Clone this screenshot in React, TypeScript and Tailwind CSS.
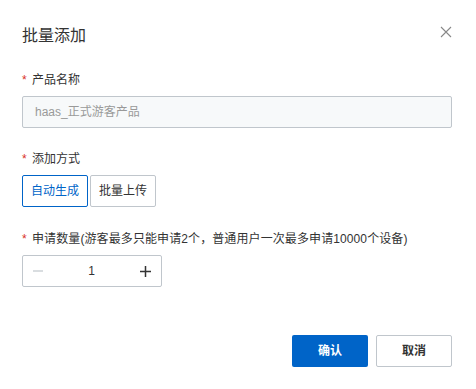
export default function App() {
  return (
    <div
      className="relative flex h-[389px] w-[476px] flex-col bg-white px-[22px] text-[#333]"
      style={{ fontFamily: '"Liberation Sans", "Noto Sans CJK SC", sans-serif' }}
    >
      <div className="flex items-start justify-between pt-[24px]">
        <h1 className="text-[16px] leading-[24px]">批量添加</h1>
        <button className="mt-[2px] mr-[2px] text-[#888]">
          <svg width="12" height="12" viewBox="0 0 12 12" fill="none" stroke="currentColor" strokeWidth="1.1">
            <path d="M1 1L11 11M11 1L1 11" />
          </svg>
        </button>
      </div>

      <label className="mt-[23px] flex h-[18px] items-center text-[12px]">
        <span className="w-[10px] text-[#d93026]">*</span>
        产品名称
      </label>
      <div className="mt-[7px] flex h-[32px] w-[430px] items-center rounded-[2px] border border-[#c0c6cc] bg-[#f7f9fa] px-[12px] text-[12px] text-[#999]">
        haas_正式游客产品
      </div>

      <label className="mt-[22px] flex h-[18px] items-center text-[12px]">
        <span className="w-[10px] text-[#d93026]">*</span>
        添加方式
      </label>
      <div className="mt-[7px] flex gap-[2px]">
        <button className="h-[32px] w-[66px] rounded-[2px] border border-[#0064c8] text-[12px] text-[#0064c8]">
          自动生成
        </button>
        <button className="h-[32px] w-[66px] rounded-[2px] border border-[#c0c6cc] text-[12px] text-[#333]">
          批量上传
        </button>
      </div>

      <label className="mt-[23px] flex h-[18px] items-center text-[12px] tracking-[0.1px]">
        <span className="w-[10px] text-[#d93026]">*</span>
        申请数量(游客最多只能申请2个，普通用户一次最多申请10000个设备)
      </label>
      <div className="mt-[7px] flex h-[32px] w-[140px] items-center rounded-[2px] border border-[#c0c6cc] text-[12px]">
        <span className="flex w-[30px] justify-center text-[#c0c6cc]">
          <svg width="10" height="10" viewBox="0 0 10 10" stroke="currentColor" strokeWidth="1.2">
            <path d="M0 5H10" />
          </svg>
        </span>
        <span className="flex-1 text-center text-[#333]">1</span>
        <span className="flex w-[31px] justify-center text-[#333]">
          <svg width="11" height="11" viewBox="0 0 11 11" stroke="currentColor" strokeWidth="1.5">
            <path d="M0 5.5H11M5.5 0V11" />
          </svg>
        </span>
      </div>

      <div className="mt-[48px] flex justify-end gap-[8px] pr-[2px]">
        <button className="h-[32px] w-[76px] rounded-[2px] bg-[#0064c8] text-[12px] font-bold text-white">
          确认
        </button>
        <button className="h-[32px] w-[76px] rounded-[2px] border border-[#c0c6cc] bg-white text-[12px] font-bold text-[#333]">
          取消
        </button>
      </div>
    </div>
  )
}
